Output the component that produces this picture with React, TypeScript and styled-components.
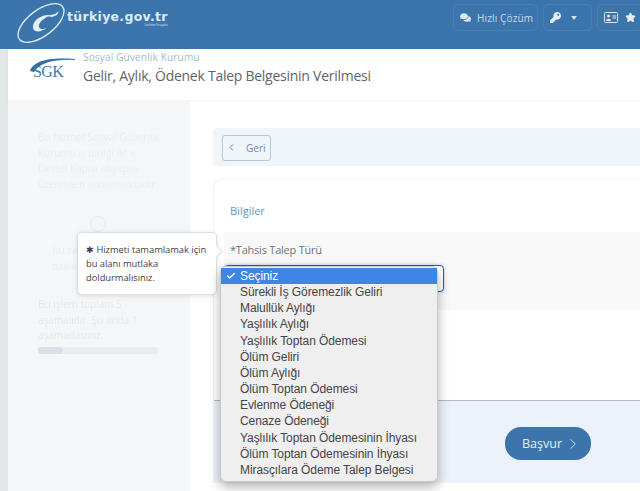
import React from "react";
import styled, { createGlobalStyle } from "styled-components";
import { ChevronLeft, ChevronRight, Star, Check } from "lucide-react";
import { FaComments, FaKey } from "react-icons/fa";

const Global = createGlobalStyle`
  html, body { margin: 0; padding: 0; background: #fff; overflow: hidden; }
  body { width: 640px; height: 491px; font-family: "Open Sans", sans-serif; color: #555; }
  * { box-sizing: border-box; }
`;

const Page = styled.div`
  position: relative;
  width: 640px;
  height: 491px;
  overflow: hidden;
  display: flex;
  flex-direction: column;
`;

const Header = styled.header`
  height: 49px;
  flex: none;
  background: #3b75ab;
  display: flex;
  align-items: flex-start;
  justify-content: space-between;
  padding: 1px 0 0 16px;
`;

const Brand = styled.div`
  display: flex;
  align-items: flex-start;
`;

const BrandText = styled.div`
  display: flex;
  flex-direction: column;
  align-items: flex-end;
  margin: 8px 0 0 1px;
`;

const BrandName = styled.span`
  font: bold 12.5px/16px "DejaVu Sans", sans-serif;
  letter-spacing: 0.3px;
  color: #dfeaf3;
`;

const BrandSub = styled.span`
  font: 3px/3px "Liberation Sans", sans-serif;
  color: #cfe0ee;
  margin-top: -1px;
`;

const Tools = styled.div`
  display: flex;
  gap: 5px;
  margin-top: 3px;
  width: 187px;
  overflow: hidden;
  flex: none;
`;

const ToolButton = styled.div<{ $gap: number; $width: number }>`
  height: 27px;
  width: ${(p) => p.$width}px;
  padding: 0 0 0 6px;
  border: 1px solid #4b80b5;
  border-radius: 6px;
  display: flex;
  align-items: center;
  gap: ${(p) => p.$gap}px;
  font-size: 10px;
  letter-spacing: 0.14px;
  color: #c6dbec;
  white-space: nowrap;
  flex: none;
`;

const Caret = styled.span`
  width: 0;
  height: 0;
  border-left: 3.5px solid transparent;
  border-right: 3.5px solid transparent;
  border-top: 4px solid #cfe0ee;
`;

const Body = styled.div`
  flex: 1;
  display: flex;
  min-height: 0;
`;

const Strip = styled.div`
  width: 8px;
  flex: none;
  background: #e2e8e7;
`;

const Main = styled.div`
  flex: 1;
  min-width: 0;
  display: flex;
  flex-direction: column;
`;

const TitleBar = styled.div`
  height: 51px;
  flex: none;
  background: #fff;
  box-shadow: 0 1px 2px rgba(0, 0, 0, 0.05);
  position: relative;
  display: flex;
  align-items: flex-start;
  padding: 2px 0 0 22px;
`;

const SgkLogo = styled.div`
  position: relative;
  width: 53px;
  height: 30px;
  margin-top: 4px;
  flex: none;
`;

const SgkText = styled.span`
  position: absolute;
  left: 3px;
  top: 8px;
  font: 16px/17px "Liberation Serif", serif;
  letter-spacing: -0.6px;
  color: #3a7fae;
`;

const Titles = styled.div`
  display: flex;
  flex-direction: column;
`;

const Org = styled.span`
  font-size: 10px;
  line-height: 13px;
  letter-spacing: 0.17px;
  color: #9dbbcf;
`;

const PageTitle = styled.span`
  font-size: 14px;
  line-height: 24px;
  color: #606468;
  letter-spacing: -0.26px;
`;

const Columns = styled.div`
  flex: 1;
  min-height: 0;
  display: flex;
`;

const Sidebar = styled.aside`
  width: 182px;
  flex: none;
  background: #f5f6f7;
  padding: 30px 0 0 30px;
  color: #ebedef;
  font-size: 10px;
  line-height: 15.5px;
  filter: blur(0.5px);
`;

const SideText = styled.p`
  margin: 0;
  width: 125px;
`;

const SideCircle = styled.div`
  width: 16px;
  height: 16px;
  border: 1px solid #e6e8ea;
  border-radius: 50%;
  margin: 24px 0 0 52px;
`;

const SideNote = styled(SideText)`
  margin: 11px 0 0 14px;
  width: 60px;
  white-space: nowrap;
`;

const SideSteps = styled(SideText)`
  margin-top: 23px;
  color: #e6e8eb;
`;

const Progress = styled.div`
  width: 120px;
  height: 7px;
  background: #e9ebee;
  border-radius: 3px;
  margin-top: 3px;
`;

const ProgressFill = styled.div`
  width: 24px;
  height: 100%;
  background: #d8dfe7;
  border-radius: 3px;
`;

const Content = styled.div`
  flex: 1;
  min-width: 0;
  padding: 28px 0 0 23px;
  display: flex;
  flex-direction: column;
`;

const BackBar = styled.div`
  height: 38px;
  flex: none;
  background: #f0f5fa;
  border-radius: 4px 0 0 4px;
  display: flex;
  align-items: center;
  padding: 1px 0 0 9px;
`;

const BackButton = styled.div`
  width: 49px;
  height: 26px;
  border: 1px solid #b4c6d4;
  border-radius: 3px;
  display: flex;
  align-items: center;
  padding-left: 3px;
  gap: 9px;
  font-size: 10px;
  color: #7d8a94;
`;

const Card = styled.section`
  margin-top: 13px;
  flex: none;
  height: 304px;
  border: 1px solid #f2f3f4;
  border-right: 0;
  border-radius: 8px 0 0 0;
  display: flex;
  flex-direction: column;
`;

const CardTitle = styled.h3`
  margin: 0;
  height: 52px;
  flex: none;
  padding: 23px 0 0 16px;
  font-size: 11px;
  line-height: 15px;
  font-weight: 400;
  color: #5f98b8;
`;

const FieldPanel = styled.div`
  height: 78px;
  flex: none;
  margin-left: 10px;
  background: #f8f8f8;
  padding: 10px 0 0 6px;
`;

const FieldLabel = styled.div`
  font-size: 11px;
  line-height: 16px;
  letter-spacing: -0.22px;
  color: #6f7478;
`;

const SelectBox = styled.div`
  width: 220px;
  height: 27px;
  margin: 7px 0 0 -6px;
  background: #fff;
  border: 1.5px solid #2f5d96;
  border-radius: 4px;
  box-shadow: 0 0 3px rgba(61, 134, 230, 0.5);
`;

const Spacer = styled.div`
  height: 91px;
  flex: none;
  border-bottom: 1px solid #b5b8ba;
`;

const Footer = styled.div`
  flex: 1;
  background: #ecf2f9;
  display: flex;
  align-items: flex-start;
  padding: 26px 0 0 291px;
`;

const ApplyButton = styled.div`
  width: 86px;
  height: 33px;
  background: #3b75ab;
  border-radius: 16px;
  display: flex;
  align-items: center;
  justify-content: flex-end;
  gap: 2px;
  padding-right: 9px;
  color: #e3f0f9;
  font-size: 12.5px;
`;

const Tooltip = styled.div`
  position: absolute;
  left: 77px;
  top: 232px;
  width: 140px;
  height: 63px;
  padding: 10px 8px;
  background: #fff;
  border: 1px solid #d7e0e8;
  border-radius: 5px;
  box-shadow: 0 1px 5px rgba(60, 90, 130, 0.18);
  font-size: 9.3px;
  line-height: 14.2px;
  color: #3c4043;
  &::after {
    content: "";
    position: absolute;
    right: -5px;
    top: 14px;
    width: 8px;
    height: 8px;
    background: #fff;
    border-top: 1px solid #d7e0e8;
    border-right: 1px solid #d7e0e8;
    transform: rotate(45deg);
  }
`;

const Menu = styled.ul`
  position: absolute;
  left: 220px;
  top: 266px;
  width: 218px;
  height: 216px;
  margin: 0;
  padding: 1px 0 0;
  list-style: none;
  background: #efefef;
  border: 1px solid #c9c9c9;
  border-radius: 6px;
  box-shadow: 0 5px 12px rgba(0, 0, 0, 0.3);
  font: 12px/16.17px "Liberation Sans", sans-serif;
  letter-spacing: -0.08px;
  color: #444;
`;

const MenuItem = styled.li<{ $active?: boolean }>`
  height: 16.17px;
  padding-left: 19px;
  position: relative;
  white-space: nowrap;
  background: ${(p) => (p.$active ? "#3d86e6" : "transparent")};
  color: ${(p) => (p.$active ? "#fff" : "inherit")};
  svg {
    position: absolute;
    left: 5px;
    top: 3px;
  }
`;

const items = [
  "Sürekli İş Göremezlik Geliri",
  "Malullük Aylığı",
  "Yaşlılık Aylığı",
  "Yaşlılık Toptan Ödemesi",
  "Ölüm Geliri",
  "Ölüm Aylığı",
  "Ölüm Toptan Ödemesi",
  "Evlenme Ödeneği",
  "Cenaze Ödeneği",
  "Yaşlılık Toptan Ödemesinin İhyası",
  "Ölüm Toptan Ödemesinin İhyası",
  "Mirasçılara Ödeme Talep Belgesi",
];

function LogoMark() {
  return (
    <svg width="50" height="44" viewBox="0 0 50 44" fill="none">
      <ellipse cx="25" cy="22" rx="27" ry="13" transform="rotate(-37 25 22)" stroke="#dfeaf3" strokeWidth="1.3" />
      <path d="M34 14 C25 13 16 20 17 27 C18 32 25 31 31 27 C26 29 22 28 23 24 C24 20 29 17 34 14 Z" fill="#e4eef6" />
      <path d="M30 15 L39 13 L43 10 L41 14 L36 16 Z" fill="#e4eef6" />
    </svg>
  );
}

function SgkSwoosh() {
  return (
    <svg width="46" height="15" viewBox="0 0 46 15" fill="none">
      <path d="M0 14 C3 5 16 0 45 2 L45 3 C26 2 10 5 4 15 Z" fill="#2f6f9f" />
    </svg>
  );
}

function IdCard() {
  return (
    <svg width="14" height="11" viewBox="0 0 14 11" fill="none">
      <rect x="0.5" y="0.5" width="13" height="10" rx="1" stroke="#dce8f2" />
      <circle cx="4.5" cy="4" r="1.5" fill="#dce8f2" />
      <path d="M2 9 C2 6 7 6 7 9 Z" fill="#dce8f2" />
      <path d="M8.5 4 H12 M8.5 6 H12" stroke="#dce8f2" />
    </svg>
  );
}

export default function App() {
  return (
    <Page>
      <Global />
      <Header>
        <Brand>
          <LogoMark />
          <BrandText>
            <BrandName>türkiye.gov.tr</BrandName>
            <BrandSub>Devletin Kısayolu</BrandSub>
          </BrandText>
        </Brand>
        <Tools>
          <ToolButton $gap={6} $width={85}>
            <FaComments size={11} color="#dce8f2" />
            Hızlı Çözüm
          </ToolButton>
          <ToolButton $gap={10} $width={49}>
            <FaKey size={11} color="#e6eff6" />
            <Caret />
          </ToolButton>
          <ToolButton $gap={7} $width={48}>
            <IdCard />
            <Star size={11} fill="#e6eff6" color="#e6eff6" />
          </ToolButton>
        </Tools>
      </Header>
      <Body>
        <Strip />
        <Main>
          <TitleBar>
            <SgkLogo>
              <SgkSwoosh />
              <SgkText>SGK</SgkText>
            </SgkLogo>
            <Titles>
              <Org>Sosyal Güvenlik Kurumu</Org>
              <PageTitle>Gelir, Aylık, Ödenek Talep Belgesinin Verilmesi</PageTitle>
            </Titles>
          </TitleBar>
          <Columns>
            <Sidebar>
              <SideText>Bu hizmet Sosyal Güvenlik Kurumu iş birliği ile e-Devlet Kapısı altyapısı üzerinden sunulmaktadır.</SideText>
              <SideCircle />
              <SideNote>Bu sayfa<br />dakika</SideNote>
              <SideSteps>Bu işlem toplam 5 aşamalıdır. Şu anda 1. aşamadasınız.</SideSteps>
              <Progress>
                <ProgressFill />
              </Progress>
            </Sidebar>
            <Content>
              <BackBar>
                <BackButton>
                  <ChevronLeft size={11} color="#6f7f8c" />
                  Geri
                </BackButton>
              </BackBar>
              <Card>
                <CardTitle>Bilgiler</CardTitle>
                <FieldPanel>
                  <FieldLabel>*Tahsis Talep Türü</FieldLabel>
                  <SelectBox />
                </FieldPanel>
                <Spacer />
                <Footer>
                  <ApplyButton>
                    Başvur
                    <ChevronRight size={18} strokeWidth={1.2} color="#dcebf6" />
                  </ApplyButton>
                </Footer>
              </Card>
            </Content>
          </Columns>
        </Main>
      </Body>
      <Tooltip>✱ Hizmeti tamamlamak için bu alanı mutlaka doldurmalısınız.</Tooltip>
      <Menu>
        <MenuItem $active>
          <Check size={10} strokeWidth={3.5} />
          Seçiniz
        </MenuItem>
        {items.map((t) => (
          <MenuItem key={t}>{t}</MenuItem>
        ))}
      </Menu>
    </Page>
  );
}
